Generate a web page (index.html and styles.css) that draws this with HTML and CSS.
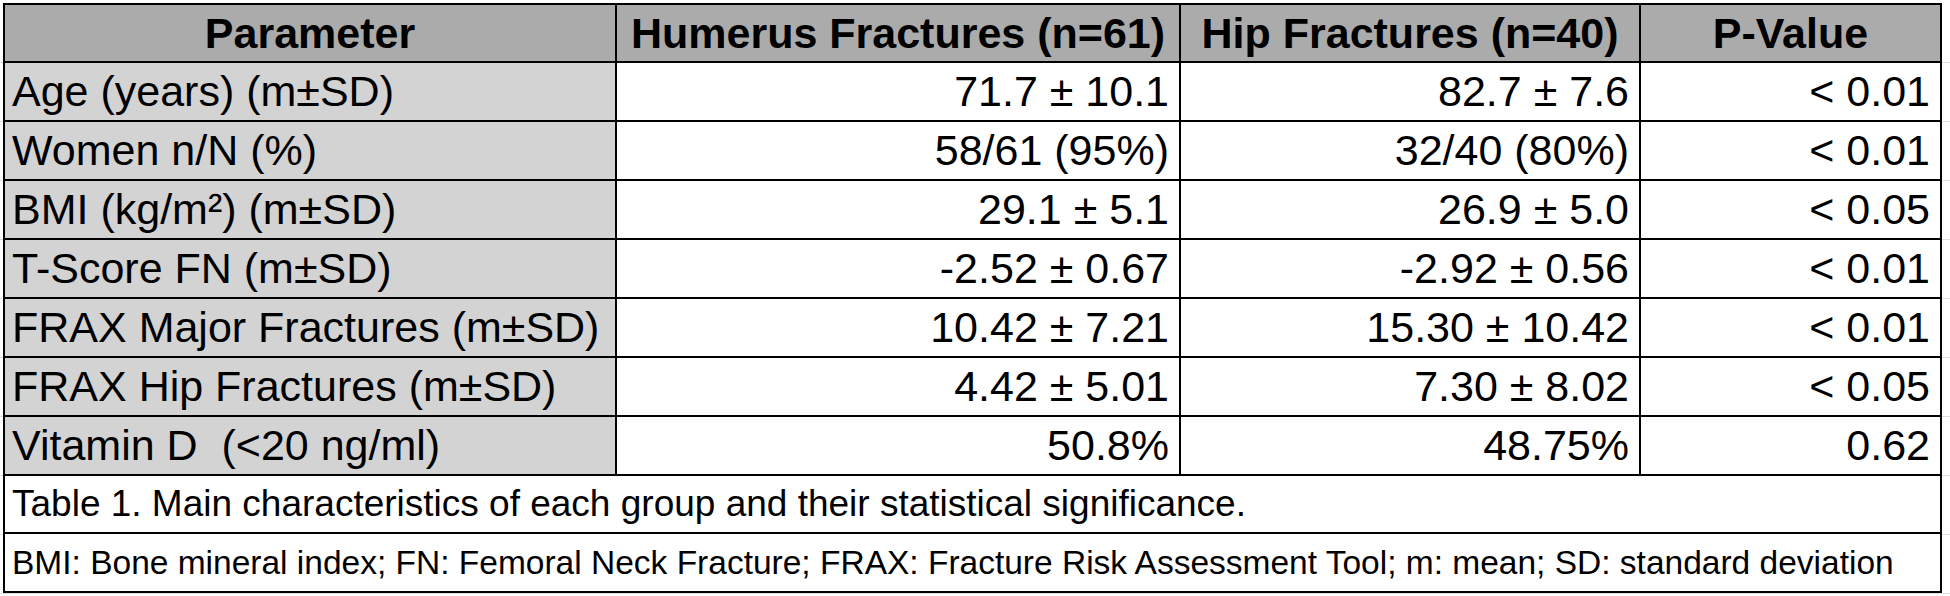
FILE: index.html
```html
<!DOCTYPE html>
<html lang="en">
<head>
<meta charset="utf-8">
<title>Table 1</title>
<link rel="stylesheet" href="styles.css">
</head>
<body>
<div class="sheet">
  <div class="grid">
    <div class="cell head">Parameter</div>
    <div class="cell head">Humerus Fractures (n=61)</div>
    <div class="cell head">Hip Fractures (n=40)</div>
    <div class="cell head">P-Value</div>

    <div class="cell label">Age (years) (m±SD)</div>
    <div class="cell num">71.7 ± 10.1</div>
    <div class="cell num">82.7 ± 7.6</div>
    <div class="cell num">&lt; 0.01</div>

    <div class="cell label">Women n/N (%)</div>
    <div class="cell num">58/61 (95%)</div>
    <div class="cell num">32/40 (80%)</div>
    <div class="cell num">&lt; 0.01</div>

    <div class="cell label">BMI (kg/m²) (m±SD)</div>
    <div class="cell num">29.1 ± 5.1</div>
    <div class="cell num">26.9 ± 5.0</div>
    <div class="cell num">&lt; 0.05</div>

    <div class="cell label">T-Score FN (m±SD)</div>
    <div class="cell num">-2.52 ± 0.67</div>
    <div class="cell num">-2.92 ± 0.56</div>
    <div class="cell num">&lt; 0.01</div>

    <div class="cell label">FRAX Major Fractures (m±SD)</div>
    <div class="cell num">10.42 ± 7.21</div>
    <div class="cell num">15.30 ± 10.42</div>
    <div class="cell num">&lt; 0.01</div>

    <div class="cell label">FRAX Hip Fractures (m±SD)</div>
    <div class="cell num">4.42 ± 5.01</div>
    <div class="cell num">7.30 ± 8.02</div>
    <div class="cell num">&lt; 0.05</div>

    <div class="cell label">Vitamin D&nbsp; (&lt;20 ng/ml)</div>
    <div class="cell num">50.8%</div>
    <div class="cell num">48.75%</div>
    <div class="cell num">0.62</div>

    <div class="cell wide caption">Table 1. Main characteristics of each group and their statistical significance.</div>
    <div class="cell wide footnote">BMI: Bone mineral index; FN: Femoral Neck Fracture; FRAX: Fracture Risk Assessment Tool; m: mean; SD: standard deviation</div>
  </div>
</div>
</body>
</html>
```

FILE: styles.css
```css
html, body {
  margin: 0;
  padding: 0;
  background: #ffffff;
}

body {
  font-family: "Liberation Sans", Arial, Helvetica, sans-serif;
  color: #000;
  width: 1950px;
  height: 596px;
  overflow: hidden;
  background-image: repeating-linear-gradient(to bottom, transparent 0, transparent 58px, #e0e0e0 58px, #e0e0e0 59px);
  background-position: 0 4px;
}

.sheet {
  padding: 3px 0 0 3px;
}

.grid {
  display: grid;
  grid-template-columns: 612px 564px 460px 301px;
  grid-template-rows: 58px repeat(7, 59px) 58px 59px;
  width: max-content;
  border-top: 2px solid #000;
  border-left: 2px solid #000;
  background: #fff;
}

.cell {
  box-sizing: border-box;
  border-right: 2px solid #000;
  border-bottom: 2px solid #000;
  display: flex;
  align-items: center;
  white-space: nowrap;
  font-size: 43px;
  padding: 0 10px 0 7px;
  background: #fff;
}

.head {
  background: #ababab;
  font-weight: bold;
  justify-content: center;
  padding: 0;
}

.label {
  background: #d3d3d3;
}

.num {
  justify-content: flex-end;
}

.wide {
  grid-column: 1 / -1;
}

.caption {
  font-size: 37px;
}

.footnote {
  font-size: 33.5px;
}
```
